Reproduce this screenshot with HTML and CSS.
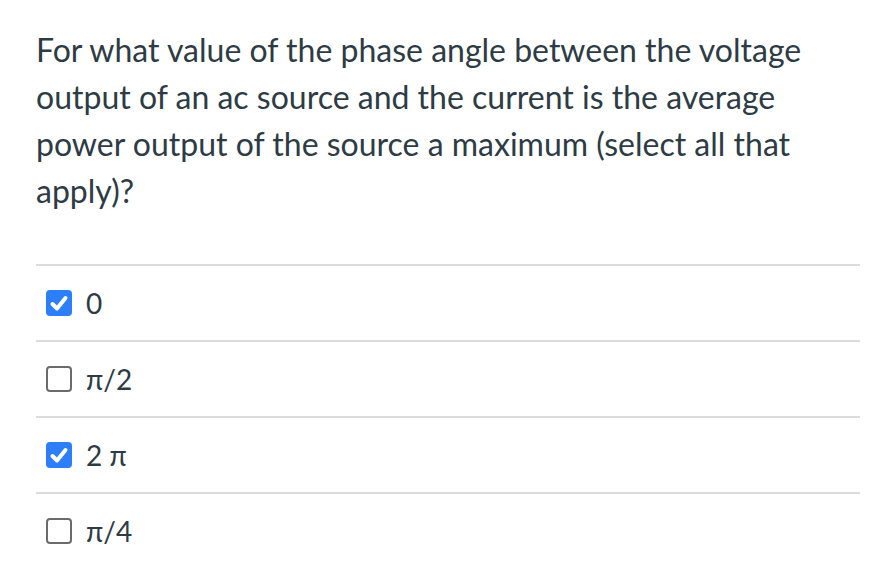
FILE: index.html
```html
<!DOCTYPE html>
<html>
<head>
<meta charset="utf-8">
<link rel="stylesheet" href="styles.css">
</head>
<body>
<div class="question">
  <p class="prompt">For what value of the phase angle between the voltage output of an ac source and the current is the average power output of the source a maximum (select all that apply)?</p>
  <ul class="answers">
    <li class="answer"><span class="box checked"><svg viewBox="0 0 26 26" width="26" height="26"><path d="M6.5 14 L11 18.5 L19.5 8" fill="none" stroke="#fff" stroke-width="4" stroke-linecap="round" stroke-linejoin="round"/></svg></span><span class="label">0</span></li>
    <li class="answer"><span class="box"></span><span class="label">π/2</span></li>
    <li class="answer"><span class="box checked"><svg viewBox="0 0 26 26" width="26" height="26"><path d="M6.5 14 L11 18.5 L19.5 8" fill="none" stroke="#fff" stroke-width="4" stroke-linecap="round" stroke-linejoin="round"/></svg></span><span class="label">2 π</span></li>
    <li class="answer"><span class="box"></span><span class="label">π/4</span></li>
  </ul>
</div>
</body>
</html>
```
FILE: styles.css
```css
html, body {
  margin: 0;
  padding: 0;
  background: #fff;
}
body {
  font-family: Lato, "Liberation Sans", sans-serif;
  color: #2d3b45;
}
.question {
  padding: 26px 16px 0 36px;
}
.prompt {
  margin: 0;
  font-size: 32px;
  line-height: 47px;
}
.answers {
  list-style: none;
  margin: 50px 0 0 0;
  padding: 0;
  border-top: 2px solid #dcdcdc;
}
.answer {
  display: flex;
  align-items: center;
  height: 74px;
  border-bottom: 2px solid #dcdcdc;
  padding-left: 10px;
  font-size: 28px;
}
.answer:last-child {
  border-bottom: none;
}
.box {
  width: 26px;
  height: 26px;
  box-sizing: border-box;
  border: 2px solid #6b6b6b;
  border-radius: 4px;
  background: #fff;
  margin-right: 14px;
  display: flex;
}
.box.checked {
  border: none;
  background: #2d7ff9;
}
.label {
  line-height: 1;
}
```
